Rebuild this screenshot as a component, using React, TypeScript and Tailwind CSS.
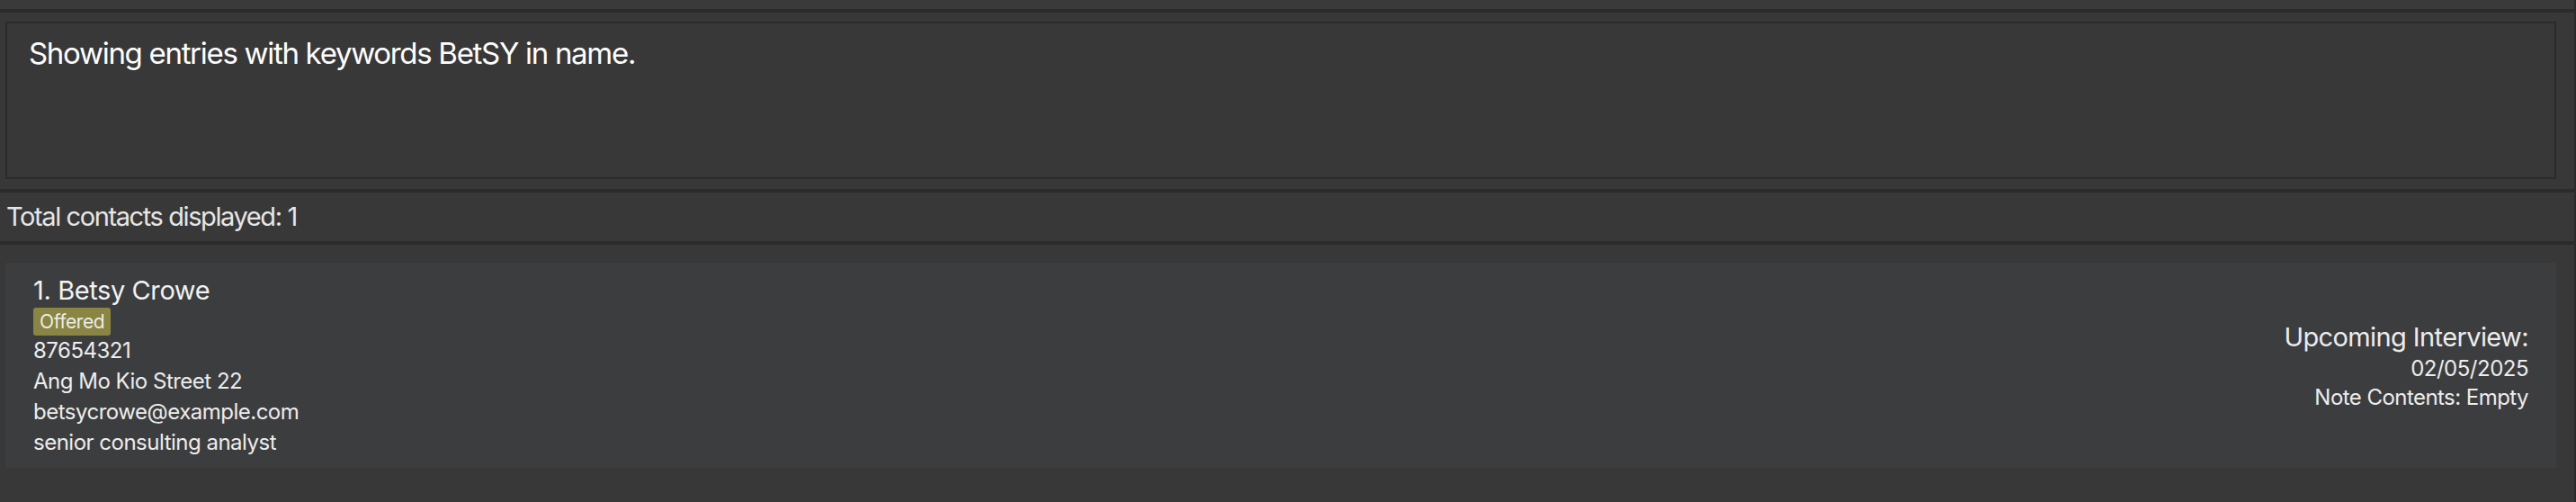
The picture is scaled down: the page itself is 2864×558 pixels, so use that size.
import React from 'react';

interface Contact {
	index: number;
	name: string;
	status: string;
	phone: string;
	address: string;
	email: string;
	job: string;
	interview: string;
	note: string;
}

const contacts: Contact[] = [
	{
		index: 1,
		name: 'Betsy Crowe',
		status: 'Offered',
		phone: '87654321',
		address: 'Ang Mo Kio Street 22',
		email: 'betsycrowe@example.com',
		job: 'senior consulting analyst',
		interview: '02/05/2025',
		note: 'Empty',
	},
];

const ContactCard = ({ contact }: { contact: Contact }) => {
	return (
		<div className="flex items-center justify-between bg-[#3c3d3f] pt-[13px] pb-[11px] pl-[31px] pr-[31px]">
			<div className="flex flex-col">
				<div className="text-[29px] leading-[35px] tracking-[-0.4px] text-[#f2f2f2]">
					{contact.index}. {contact.name}
				</div>
				<div className="mt-[2px] flex">
					<span className="rounded-[3px] bg-[#8a8540] px-[7px] text-[21px] leading-[31px] tracking-[-0.4px] text-[#ececec]">
						{contact.status}
					</span>
				</div>
				<div className="text-[24px] leading-[34px] tracking-[-0.5px] text-[#ececec]">{contact.phone}</div>
				<div className="text-[24px] leading-[34px] tracking-[-0.5px] text-[#ececec]">{contact.address}</div>
				<div className="text-[24px] leading-[34px] tracking-[-0.5px] text-[#ececec]">{contact.email}</div>
				<div className="text-[24px] leading-[34px] tracking-[-0.5px] text-[#ececec]">{contact.job}</div>
			</div>
			<div className="flex flex-col items-end text-[#ececec]">
				<div className="text-[29px] leading-[38px] tracking-[-0.6px]">Upcoming Interview:</div>
				<div className="text-[24px] leading-[32px] tracking-[-0.5px]">{contact.interview}</div>
				<div className="text-[24px] leading-[32px] tracking-[-0.55px]">Note Contents: {contact.note}</div>
			</div>
		</div>
	);
};

const App = () => {
	return (
		<div
			className="flex h-[558px] w-full flex-col overflow-hidden border-r-2 border-[#2b2b2b] bg-[#383838]"
			style={{ fontFamily: 'Inter, "Noto Sans", sans-serif' }}
		>
			{/* top strip */}
			<div className="h-[10px] shrink-0 bg-[#3a3a3a]" />
			<div className="h-[4px] shrink-0 bg-[#2b2b2b]" />

			{/* result display */}
			<div className="shrink-0 bg-[#383838] pt-[10px] pb-[11px] pl-[6px] pr-[20px]">
				<div className="h-[175px] border-2 border-[#2b2b2b] bg-[#383838] pt-[13px] pl-[24px]">
					<div className="text-[33px] leading-[40px] tracking-[-1.3px] text-white">
						Showing entries with keywords BetSY in name.
					</div>
				</div>
			</div>
			<div className="h-[4px] shrink-0 bg-[#2b2b2b]" />

			{/* status bar */}
			<div className="flex h-[54px] shrink-0 items-center bg-[#383838] pl-[7px]">
				<span className="text-[29px] leading-[36px] tracking-[-1.4px] text-[#e6e6e6]">
					Total contacts displayed: 1
				</span>
			</div>
			<div className="h-[4px] shrink-0 bg-[#2b2b2b]" />

			{/* contact list */}
			<div className="flex flex-1 flex-col bg-[#383838] pt-[20px] pl-[6px] pr-[20px]">
				{contacts.map((contact) => (
					<ContactCard key={contact.index} contact={contact} />
				))}
			</div>
		</div>
	);
};

export default App;
